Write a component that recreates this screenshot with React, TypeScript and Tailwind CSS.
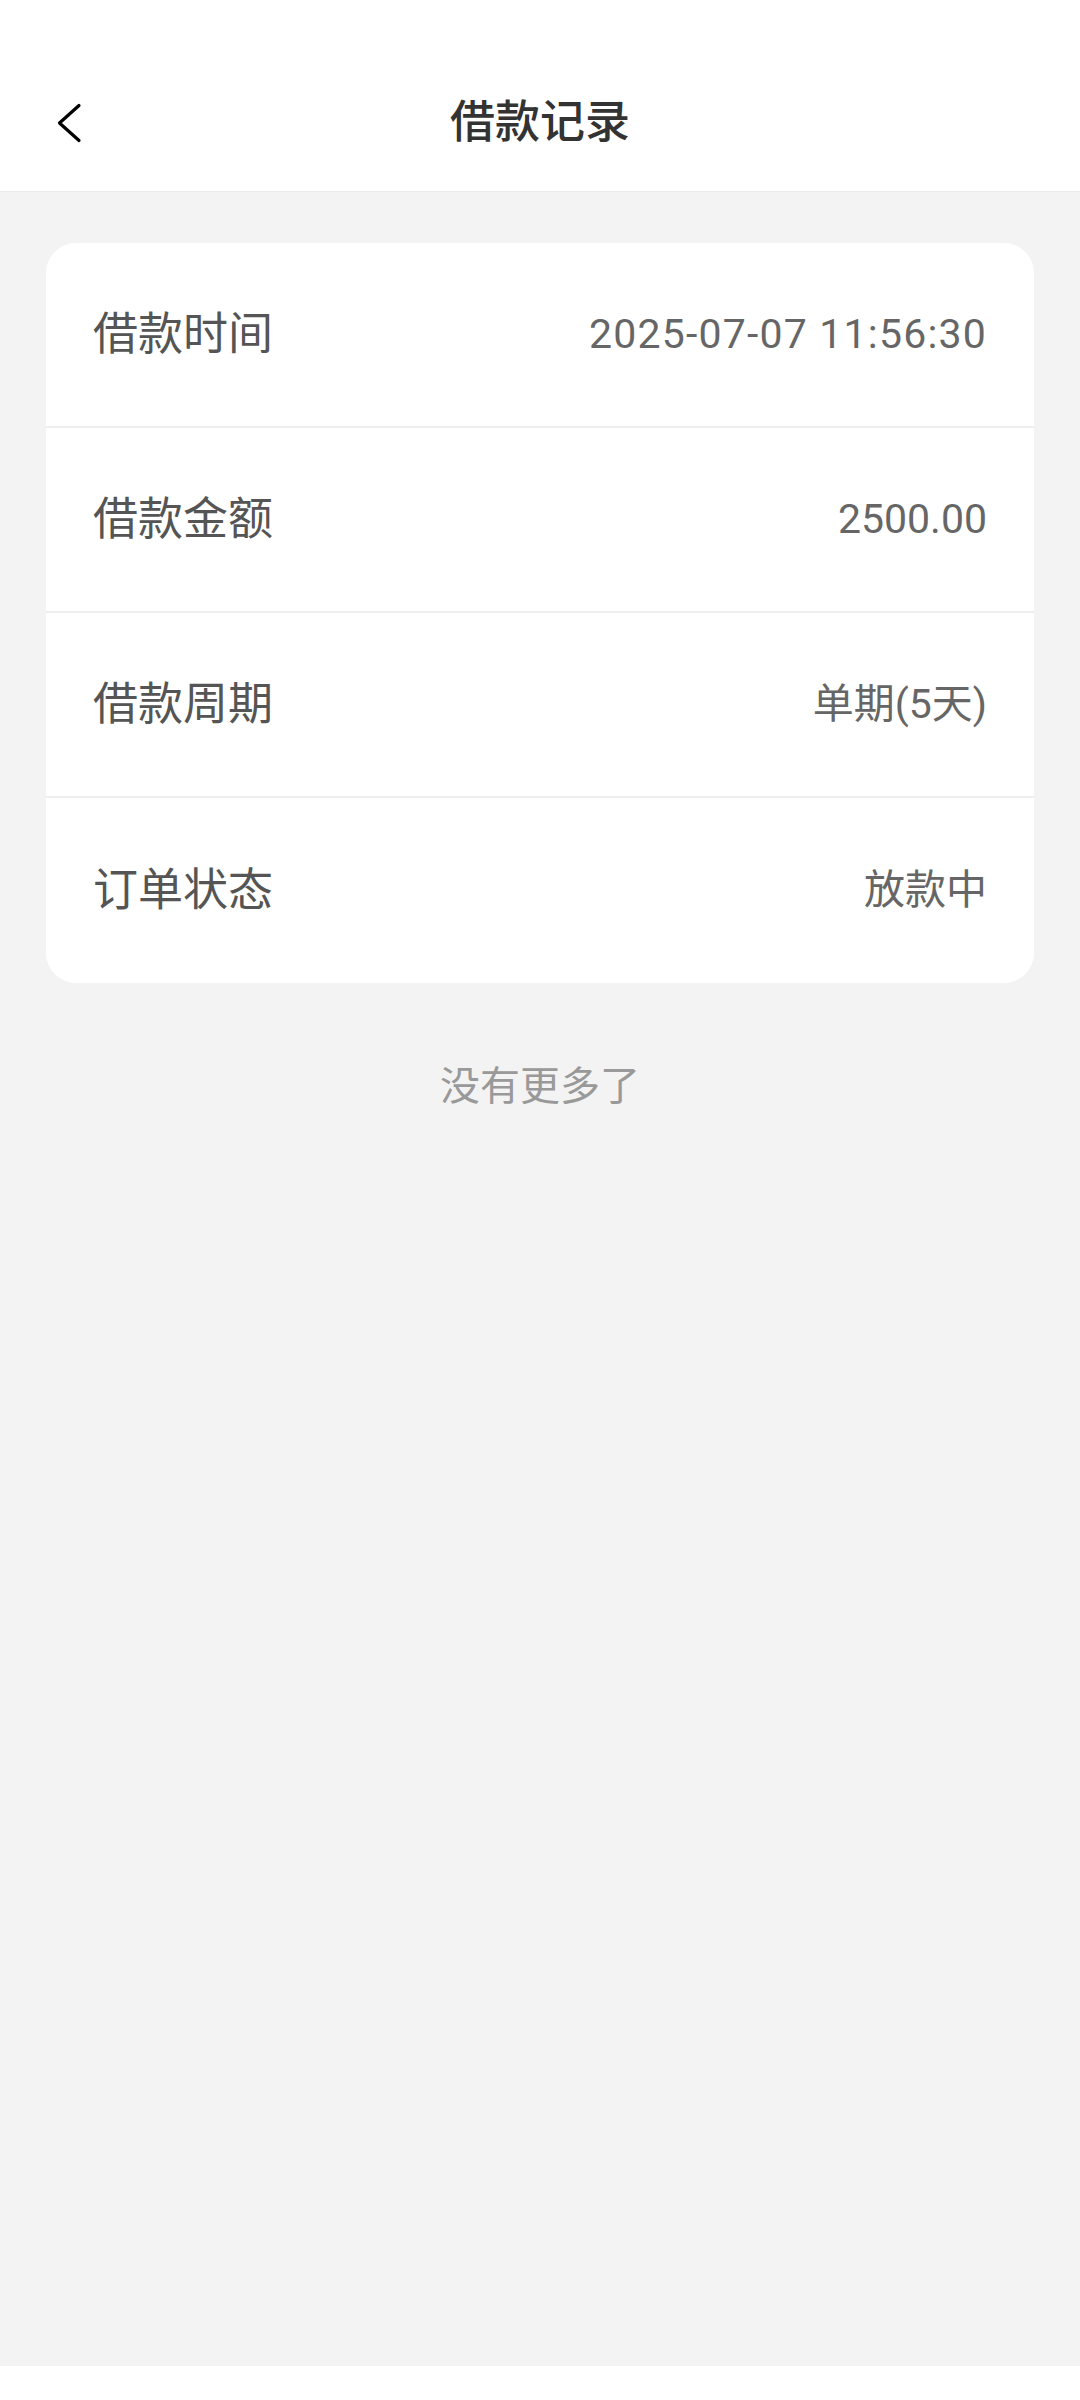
const rows = [
  { label: "借款时间", value: "2025-07-07 11:56:30", wide: true },
  { label: "借款金额", value: "2500.00" },
  { label: "借款周期", value: "单期(5天)" },
  { label: "订单状态", value: "放款中" },
];

export default function App() {
  return (
    <div className="flex h-[2400px] w-full flex-col bg-white font-['Roboto','Noto_Sans_CJK_SC',sans-serif]">
      {/* top bar */}
      <header className="border-b border-[#ececec] bg-white pt-[54px]">
        <div className="relative flex h-[137px] items-center justify-center">
          <button className="absolute left-[56px] top-1/2 -translate-y-1/2 text-black">
            <svg width="26" height="40" viewBox="0 0 26 40" fill="none" stroke="currentColor" strokeWidth="3.2" strokeLinecap="round" strokeLinejoin="round" className="block">
              <path d="M23 2.5 3.5 20 23 37.5" />
            </svg>
          </button>
          <h1 className="text-[45px] font-medium leading-none text-[#333]">借款记录</h1>
        </div>
      </header>

      <main className="flex-1 bg-[#f3f3f3] px-[46px] pt-[51px]">
        <div className="overflow-hidden rounded-[30px] bg-white">
          {rows.map((row) => (
            <div
              key={row.label}
              className="flex h-[185px] items-center justify-between border-b-2 border-[#eeeeee] px-[47px] last:border-b-0"
            >
              <span className="text-[45px] leading-none text-[#555]">{row.label}</span>
              <span className={`text-[41px] leading-none text-[#666] ${row.wide ? "tracking-[1.2px]" : ""}`}>
                {row.value}
              </span>
            </div>
          ))}
        </div>

        <p className="mt-[80px] text-center text-[40px] leading-[48px] text-[#999]">没有更多了</p>
      </main>

      <div className="h-[34px] bg-white" />
    </div>
  );
}
